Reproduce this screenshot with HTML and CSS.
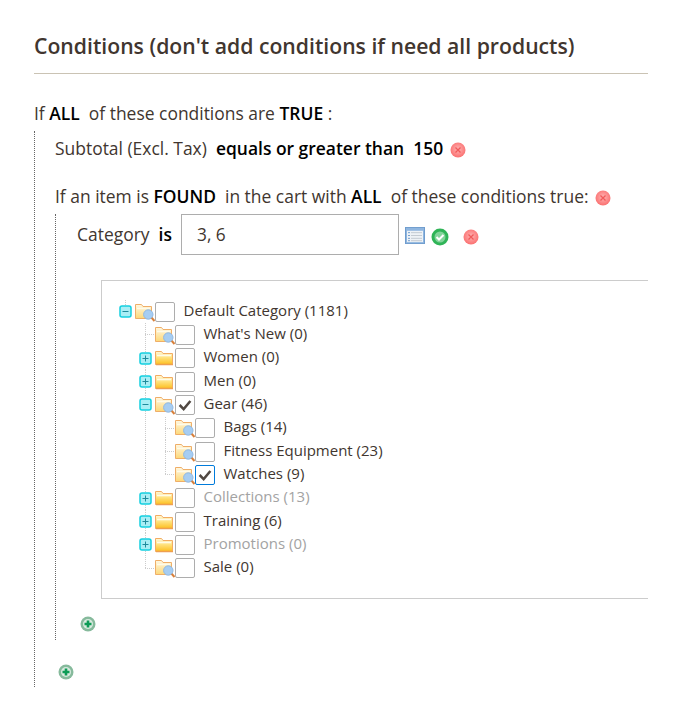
FILE: index.html
```html
<!DOCTYPE html>
<html lang="en">
<head>
    <meta charset="UTF-8">
    <title>Conditions</title>
    <link rel="stylesheet" href="styles.css">
</head>
<body>
    <svg class="sprites" width="0" height="0">
        <defs>
            <linearGradient id="folder-fill" x1="0" y1="0" x2="0" y2="1">
                <stop offset="0" stop-color="#fff8dc"/>
                <stop offset="0.4" stop-color="#ffe68a"/>
                <stop offset="1" stop-color="#fdbf1e"/>
            </linearGradient>
            <linearGradient id="folder-pale" x1="0" y1="0" x2="0" y2="1">
                <stop offset="0" stop-color="#fff8e2"/>
                <stop offset="1" stop-color="#fdd878"/>
            </linearGradient>
            <radialGradient id="red-fill" cx="0.5" cy="0.45" r="0.6">
                <stop offset="0" stop-color="#ffb4b4"/>
                <stop offset="1" stop-color="#fa6a6a"/>
            </radialGradient>
            <symbol id="folder" viewBox="0 0 20 20">
                <path d="M0.500 3.500h6l1.500 2h9.500v11h-17z" fill="url(#folder-fill)" stroke="#f2ac63"/>
                <path d="M2 7.500h14" stroke="#fffbe8" stroke-width="1.500"/>
                <path d="M1 16.500h17" stroke="#ee9f50" stroke-width="1.500"/>
            </symbol>
            <symbol id="folder-leaf" viewBox="0 0 20 20">
                <path d="M0.500 2.500h6l1.500 2h8.500v12h-16z" fill="url(#folder-pale)" stroke="#efae68"/>
                <path d="M2 6.500h13" stroke="#fffbe8" stroke-width="1.500"/>
                <path d="M16 15l3.500 4" stroke="#d9803a" stroke-width="2"/>
                <circle cx="13.300" cy="12.500" r="4.700" fill="#a6cdf2" stroke="#8fb8e2"/>
            </symbol>
            <symbol id="remove" viewBox="0 0 16 16">
                <circle cx="8" cy="8" r="7.500" fill="url(#red-fill)"/>
                <path d="M5.500 5.500l5 5M10.500 5.500l-5 5" stroke="#f05a5a" stroke-width="1.300"/>
            </symbol>
            <symbol id="add" viewBox="0 0 16 16">
                <circle cx="8" cy="8" r="7.500" fill="#86ba9c"/>
                <circle cx="8" cy="8" r="5" fill="#d8eadf"/>
                <path d="M8 4.500v7M4.500 8h7" stroke="#0c9b55" stroke-width="2.600"/>
            </symbol>
            <symbol id="expand" viewBox="0 0 13 13">
                <rect x="1" y="1" width="11" height="11" rx="2" fill="#a9eef5" stroke="#14cfe0" stroke-width="1.500"/>
                <path d="M3.500 6.500h6M6.500 3.500v6" stroke="#1f8a9c"/>
            </symbol>
            <symbol id="collapse" viewBox="0 0 13 13">
                <rect x="1" y="1" width="11" height="11" rx="2" fill="#a9eef5" stroke="#14cfe0" stroke-width="1.500"/>
                <path d="M3.500 6.500h6" stroke="#1f8a9c"/>
            </symbol>
        </defs>
    </svg>

    <div class="page">
        <h2 class="section-title">Conditions (don't add conditions if need all products)</h2>

        <p class="rule-line">If <b>ALL</b>&nbsp; of these conditions are <b>TRUE</b> :</p>
        <div class="rule-children">
            <p class="rule-line">Subtotal (Excl. Tax)&nbsp; <b>equals or greater than</b>&nbsp; <b>150</b> <svg class="icon-16 icon-remove"><use href="#remove"/></svg></p>

            <p class="rule-line rule-found">If an item is <b>FOUND</b>&nbsp; in the cart with <b>ALL</b>&nbsp; of these conditions true: <svg class="icon-16 icon-remove"><use href="#remove"/></svg></p>
            <div class="rule-children rule-nested">
                <div class="category-row">
                    <span class="category-label">Category&nbsp; <b>is</b></span>
                    <input class="category-input" type="text" value="3, 6">
                    <svg class="icon-chooser" viewBox="0 0 20 18" preserveAspectRatio="none">
                        <rect x="0.500" y="0.500" width="19" height="17" fill="#8fb6e0" stroke="#6f9ccd"/>
                        <rect x="2" y="4" width="16" height="12" fill="#eef2f6"/>
                        <path d="M3 6h2M3 9h2M3 12h2M3 14.500h2" stroke="#6f9ccd"/>
                        <path d="M6 6h11M6 9h11M6 12h11M6 14.500h11" stroke="#c2c9d1"/>
                    </svg>
                    <svg class="icon-apply" viewBox="0 0 18 18">
                        <circle cx="9" cy="9" r="8.500" fill="#2fb457"/>
                        <circle cx="9" cy="9" r="5.500" fill="#82d49a"/>
                        <path d="M5.500 9l2.500 2.500 4.500-4.500" fill="none" stroke="#fff" stroke-width="2"/>
                    </svg>
                    <svg class="icon-16 icon-remove-row"><use href="#remove"/></svg>
                </div>

                <div class="tree-box">
                    <div class="tree-row">
                        <span class="cell line-top"><svg class="toggle"><use href="#collapse"/></svg></span>
                        <svg class="folder"><use href="#folder-leaf"/></svg>
                        <span class="check"></span>
                        <span class="node-name">Default Category (1181)</span>
                    </div>

                    <div class="tree-row">
                        <span class="cell"></span>
                        <span class="cell line-branch"></span>
                        <svg class="folder"><use href="#folder-leaf"/></svg>
                        <span class="check"></span>
                        <span class="node-name">What's New (0)</span>
                    </div>
                    <div class="tree-row">
                        <span class="cell"></span>
                        <span class="cell line-through"><svg class="toggle"><use href="#expand"/></svg></span>
                        <svg class="folder"><use href="#folder"/></svg>
                        <span class="check"></span>
                        <span class="node-name">Women (0)</span>
                    </div>
                    <div class="tree-row">
                        <span class="cell"></span>
                        <span class="cell line-through"><svg class="toggle"><use href="#expand"/></svg></span>
                        <svg class="folder"><use href="#folder"/></svg>
                        <span class="check"></span>
                        <span class="node-name">Men (0)</span>
                    </div>
                    <div class="tree-row">
                        <span class="cell"></span>
                        <span class="cell line-through"><svg class="toggle"><use href="#collapse"/></svg></span>
                        <svg class="folder"><use href="#folder-leaf"/></svg>
                        <span class="check"><svg viewBox="0 0 20 20"><path d="M4 10l4.500 4.500 7.500-9" fill="none" stroke="#514943" stroke-width="2.800"/></svg></span>
                        <span class="node-name">Gear (46)</span>
                    </div>

                    <div class="tree-row">
                        <span class="cell"></span>
                        <span class="cell line-through"></span>
                        <span class="cell line-branch"></span>
                        <svg class="folder"><use href="#folder-leaf"/></svg>
                        <span class="check"></span>
                        <span class="node-name">Bags (14)</span>
                    </div>
                    <div class="tree-row">
                        <span class="cell"></span>
                        <span class="cell line-through"></span>
                        <span class="cell line-branch"></span>
                        <svg class="folder"><use href="#folder-leaf"/></svg>
                        <span class="check"></span>
                        <span class="node-name">Fitness Equipment (23)</span>
                    </div>
                    <div class="tree-row">
                        <span class="cell"></span>
                        <span class="cell line-through"></span>
                        <span class="cell line-end"></span>
                        <svg class="folder"><use href="#folder-leaf"/></svg>
                        <span class="check check-focus"><svg viewBox="0 0 20 20"><path d="M4 10l4.500 4.500 7.500-9" fill="none" stroke="#514943" stroke-width="2.800"/></svg></span>
                        <span class="node-name">Watches (9)</span>
                    </div>

                    <div class="tree-row">
                        <span class="cell"></span>
                        <span class="cell line-through"><svg class="toggle"><use href="#expand"/></svg></span>
                        <svg class="folder"><use href="#folder"/></svg>
                        <span class="check"></span>
                        <span class="node-name node-off">Collections (13)</span>
                    </div>
                    <div class="tree-row">
                        <span class="cell"></span>
                        <span class="cell line-through"><svg class="toggle"><use href="#expand"/></svg></span>
                        <svg class="folder"><use href="#folder"/></svg>
                        <span class="check"></span>
                        <span class="node-name">Training (6)</span>
                    </div>
                    <div class="tree-row">
                        <span class="cell"></span>
                        <span class="cell line-through"><svg class="toggle"><use href="#expand"/></svg></span>
                        <svg class="folder"><use href="#folder"/></svg>
                        <span class="check"></span>
                        <span class="node-name node-off">Promotions (0)</span>
                    </div>
                    <div class="tree-row">
                        <span class="cell"></span>
                        <span class="cell line-end"></span>
                        <svg class="folder"><use href="#folder-leaf"/></svg>
                        <span class="check"></span>
                        <span class="node-name">Sale (0)</span>
                    </div>
                </div>

                <div class="add-row add-inner"><svg class="icon-16"><use href="#add"/></svg></div>
            </div>
            <div class="add-row add-outer"><svg class="icon-16"><use href="#add"/></svg></div>
        </div>
    </div>
</body>
</html>
```

FILE: styles.css
```css
* {
    box-sizing: border-box;
}
body {
    margin: 0;
    background: #fff;
    color: #41362f;
    font-family: "Open Sans", sans-serif;
    font-size: 17.45px;
}
b {
    color: #000;
    font-weight: 600;
}
.sprites {
    position: absolute;
}
.page {
    width: 614px;
    margin-left: 34px;
    padding-top: 31px;
    overflow: hidden;
}
.section-title {
    margin: 0;
    height: 43px;
    border-bottom: 1px solid #cac3b4;
    font-size: 21.2px;
    font-weight: 600;
    line-height: 30px;
    color: #41362f;
}
.rule-line {
    margin: 0;
    height: 24px;
    line-height: 24px;
    white-space: nowrap;
}
.page > .rule-line {
    margin-top: 27px;
}
.rule-children {
    margin-top: 6px;
    padding: 5px 0 9px 20px;
    border-left: 1px dotted #666;
}
.rule-found {
    margin-top: 24px;
}
.rule-nested {
    margin-top: 6px;
    padding: 0 0 10px 21px;
}
.icon-16 {
    width: 16px;
    height: 16px;
    vertical-align: -3px;
}
.icon-remove {
    margin-left: 2px;
}
.category-row {
    display: flex;
    align-items: center;
    height: 41px;
}
.category-label {
    width: 104px;
    margin-bottom: 2px;
}
.category-input {
    width: 218px;
    height: 41px;
    padding: 0 15px;
    border: 1px solid #adadad;
    background: #fff;
    color: #41362f;
    font: 17.3px "Open Sans", sans-serif;
}
.icon-chooser {
    width: 20px;
    height: 17px;
    margin: 1px 0 0 6px;
}
.icon-apply {
    width: 18px;
    height: 18px;
    margin: 4px 0 0 6px;
}
.icon-remove-row {
    margin: 4px 0 0 14px;
}
.tree-box {
    width: 700px;
    margin: 25px 0 0 24px;
    padding: 19px 0 18px 13px;
    border: 1px solid #ccc;
    border-right: 0;
    font-size: 15px;
}
.tree-row {
    display: flex;
    align-items: center;
    height: 23.33px;
}
.cell {
    display: flex;
    align-items: center;
    justify-content: center;
    width: 20px;
    height: 100%;
    flex: none;
}
.line-through {
    background: repeating-linear-gradient(#ccc 0 1px, transparent 1px 2px) center / 1px 100% no-repeat;
}
.line-top {
    background: repeating-linear-gradient(#ccc 0 1px, transparent 1px 2px) center top / 1px 50% no-repeat;
}
.line-branch {
    background:
        repeating-linear-gradient(90deg, #ccc 0 1px, transparent 1px 2px) right center / 10px 1px no-repeat,
        repeating-linear-gradient(#ccc 0 1px, transparent 1px 2px) center / 1px 100% no-repeat;
}
.line-end {
    background:
        repeating-linear-gradient(90deg, #ccc 0 1px, transparent 1px 2px) right center / 10px 1px no-repeat,
        repeating-linear-gradient(#ccc 0 1px, transparent 1px 2px) center top / 1px 50% no-repeat;
}
.toggle {
    width: 13px;
    height: 13px;
    background: #fff;
}
.folder {
    width: 20px;
    height: 20px;
    flex: none;
}
.check {
    width: 20px;
    height: 20px;
    flex: none;
    border: 1px solid #adadad;
    border-radius: 2px;
    background: #fff;
}
.check svg {
    display: block;
    width: 18px;
    height: 18px;
}
.check-focus {
    border-color: #007bdb;
}
.node-name {
    margin: 0 0 4px 8.5px;
    white-space: nowrap;
}
.node-off {
    color: #a3a3a3;
}
.add-row {
    height: 16px;
    line-height: 16px;
}
.add-inner {
    margin-top: 15px;
    margin-left: 3px;
}
.add-outer {
    margin-top: 22px;
    margin-left: 3px;
}
```
